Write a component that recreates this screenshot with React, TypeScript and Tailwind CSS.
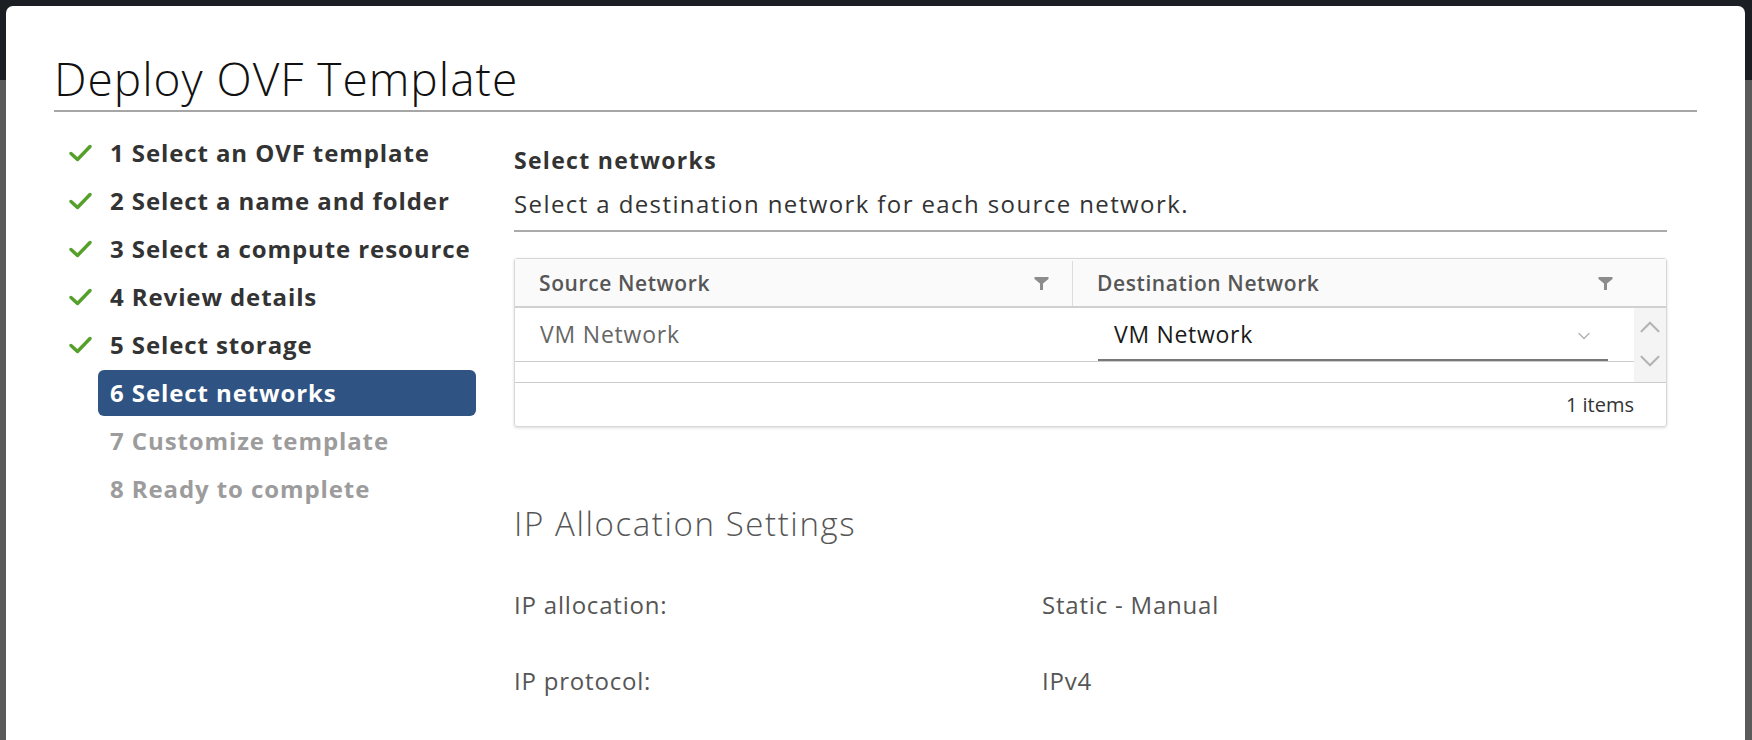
import { ChevronDown, ChevronUp } from 'lucide-react';

const steps = [
  { n: 1, label: 'Select an OVF template', state: 'done' },
  { n: 2, label: 'Select a name and folder', state: 'done' },
  { n: 3, label: 'Select a compute resource', state: 'done' },
  { n: 4, label: 'Review details', state: 'done' },
  { n: 5, label: 'Select storage', state: 'done' },
  { n: 6, label: 'Select networks', state: 'active' },
  { n: 7, label: 'Customize template', state: 'todo' },
  { n: 8, label: 'Ready to complete', state: 'todo' },
];

function Check() {
  return (
    <svg width="23" height="18" viewBox="0 0 23 18" fill="none">
      <path d="M2 9.5 L8.5 15.5 L21 2.5" stroke="#55a02a" strokeWidth="3.4" strokeLinecap="round" strokeLinejoin="round" />
    </svg>
  );
}

function Funnel() {
  return (
    <svg width="15" height="15" viewBox="0 0 15 15">
      <path d="M0.5 1 H14.5 V3 L9 7.5 V14 H6 V7.5 L0.5 3 Z" fill="#8c8c8c" />
    </svg>
  );
}

export default function App() {
  return (
    <div className="w-[1752px] h-[740px] overflow-hidden bg-[#1b1f24] flex font-['Open_Sans',sans-serif]">
      <div className="w-[6px] flex flex-col">
        <div className="h-[80px]" />
        <div className="flex-1 bg-[#5a5a5a]" />
      </div>

      <div className="flex-1 mt-[6px] bg-white rounded-t-[7px] px-[48px]">
        {/* header */}
        <h1 className="pt-[44px] pb-[4px] text-[46px] leading-[56px] tracking-[1px] font-light text-[#111] border-b-2 border-[#a6a6a6]">
          Deploy OVF Template
        </h1>

        <div className="flex">
          {/* steps */}
          <div className="w-[422px] pt-[18px]">
            {steps.map(s => (
              <div key={s.n} className="flex items-center h-[46px] mb-[2px]">
                <div className="w-[44px] pl-[15px] flex items-center">
                  {s.state === 'done' && <Check />}
                </div>
                <div
                  className={`flex-1 h-full flex items-center pl-[12px] rounded-[6px] whitespace-nowrap text-[24px] tracking-[0.9px] font-bold ${
                    s.state === 'active'
                      ? 'bg-[#2f5382] text-white'
                      : s.state === 'done'
                      ? 'text-[#333]'
                      : 'text-[#9c9c9c]'
                  }`}
                >
                  {s.n} {s.label}
                </div>
              </div>
            ))}
          </div>

          {/* content */}
          <div className="ml-[38px] w-[1153px] pt-[34px]">
            <div className="border-b-2 border-[#aaaaaa] pb-[12px]">
              <div className="text-[23px] leading-[28px] tracking-[1.3px] font-bold text-[#333]">Select networks</div>
              <div className="mt-[16px] text-[24px] leading-[28px] tracking-[1.4px] text-[#333]">
                Select a destination network for each source network.
              </div>
            </div>

            <div className="mt-[26px] border border-[#d7d7d7] rounded-[3px] shadow-[0_1px_3px_rgba(0,0,0,0.15)]">
              <div className="flex h-[49px] pt-[2px] bg-[#fafafa] border-b-2 border-[#d0d0d0] text-[21px] tracking-[0.6px] font-semibold text-[#565656]">
                <div className="w-[558px] border-r border-[#dddddd] pl-[24px] pr-[23px] flex items-center justify-between">
                  <span>Source Network</span>
                  <Funnel />
                </div>
                <div className="flex-1 pl-[24px] pr-[53px] flex items-center justify-between">
                  <span>Destination Network</span>
                  <Funnel />
                </div>
              </div>

              <div className="flex h-[74px]">
                <div className="flex-1">
                  <div className="flex h-[54px] border-b border-[#cccccc]">
                    <div className="w-[558px] pl-[25px] flex items-center text-[23px] tracking-[0.8px] text-[#666]">VM Network</div>
                    <div className="flex-1 pl-[25px] pr-[26px] flex items-center">
                      <div className="flex-1 h-[40px] mt-[12px] border-b-2 border-[#777] pl-[16px] pr-[14px] flex items-center justify-between">
                        <span className="text-[23px] tracking-[0.7px] text-[#1a1a1a] -mt-[10px]">VM Network</span>
                        <ChevronDown className="w-[20px] h-[20px] text-[#b0b0b0] -mt-[8px]" strokeWidth={1.5} />
                      </div>
                    </div>
                  </div>
                </div>
                <div className="w-[32px] bg-[#f4f4f4] flex flex-col items-center pt-[2px]">
                  <ChevronUp className="w-[34px] h-[34px] text-[#b4b4b4]" strokeWidth={1.5} />
                  <ChevronDown className="w-[34px] h-[34px] text-[#b4b4b4]" strokeWidth={1.5} />
                </div>
              </div>

              <div className="h-[44px] border-t border-[#cccccc] flex items-center justify-end pr-[32px] text-[20px] text-[#333]">
                1 items
              </div>
            </div>

            <div className="mt-[77px] text-[33px] leading-[40px] tracking-[1.6px] font-light text-[#565656]">IP Allocation Settings</div>

            <div className="mt-[46px] flex text-[24px] leading-[30px] tracking-[0.8px] text-[#565656]">
              <div className="w-[528px]">IP allocation:</div>
              <div>Static - Manual</div>
            </div>
            <div className="mt-[46px] flex text-[24px] leading-[30px] tracking-[0.8px] text-[#565656]">
              <div className="w-[528px]">IP protocol:</div>
              <div>IPv4</div>
            </div>
          </div>
        </div>
      </div>

      <div className="w-[7px] flex flex-col">
        <div className="h-[80px]" />
        <div className="flex-1 bg-[#5a5a5a]" />
      </div>
    </div>
  );
}
